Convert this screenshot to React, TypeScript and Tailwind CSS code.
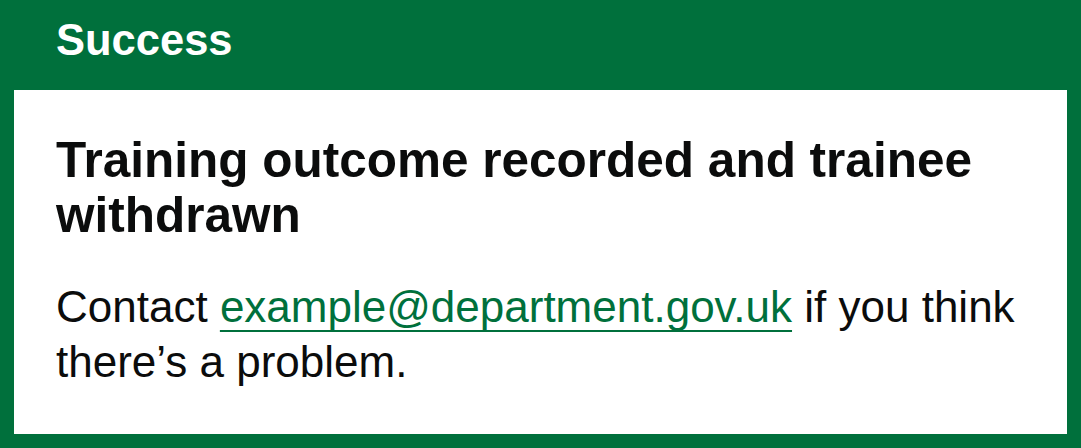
import React from "react";

export default function App() {
  return (
    <div className="w-[1081px] h-[448px] bg-[#00703c] font-['Liberation_Sans',Arial,sans-serif] flex flex-col">
      {/* Banner header */}
      <div className="h-[90px] shrink-0 pl-[56px] pt-[19px]">
        <h2 className="text-[43.5px] leading-[43px] font-bold text-white">Success</h2>
      </div>

      {/* Banner content */}
      <div className="mx-[14px] mb-[14px] flex-1 bg-white pl-[42px] pr-[20px] pt-[42px] text-[#0b0c0c]">
        <p className="text-[49.5px] leading-[55px] font-bold">
          Training outcome recorded and trainee withdrawn
        </p>
        <p className="mt-[37px] text-[44px] leading-[55px]">
          Contact{" "}
          <a
            href="#"
            className="text-[#00703c] underline decoration-[2px] underline-offset-[8px] [text-decoration-skip-ink:none]"
          >
            example@department.gov.uk
          </a>{" "}
          if you think there’s a problem.
        </p>
      </div>
    </div>
  );
}
